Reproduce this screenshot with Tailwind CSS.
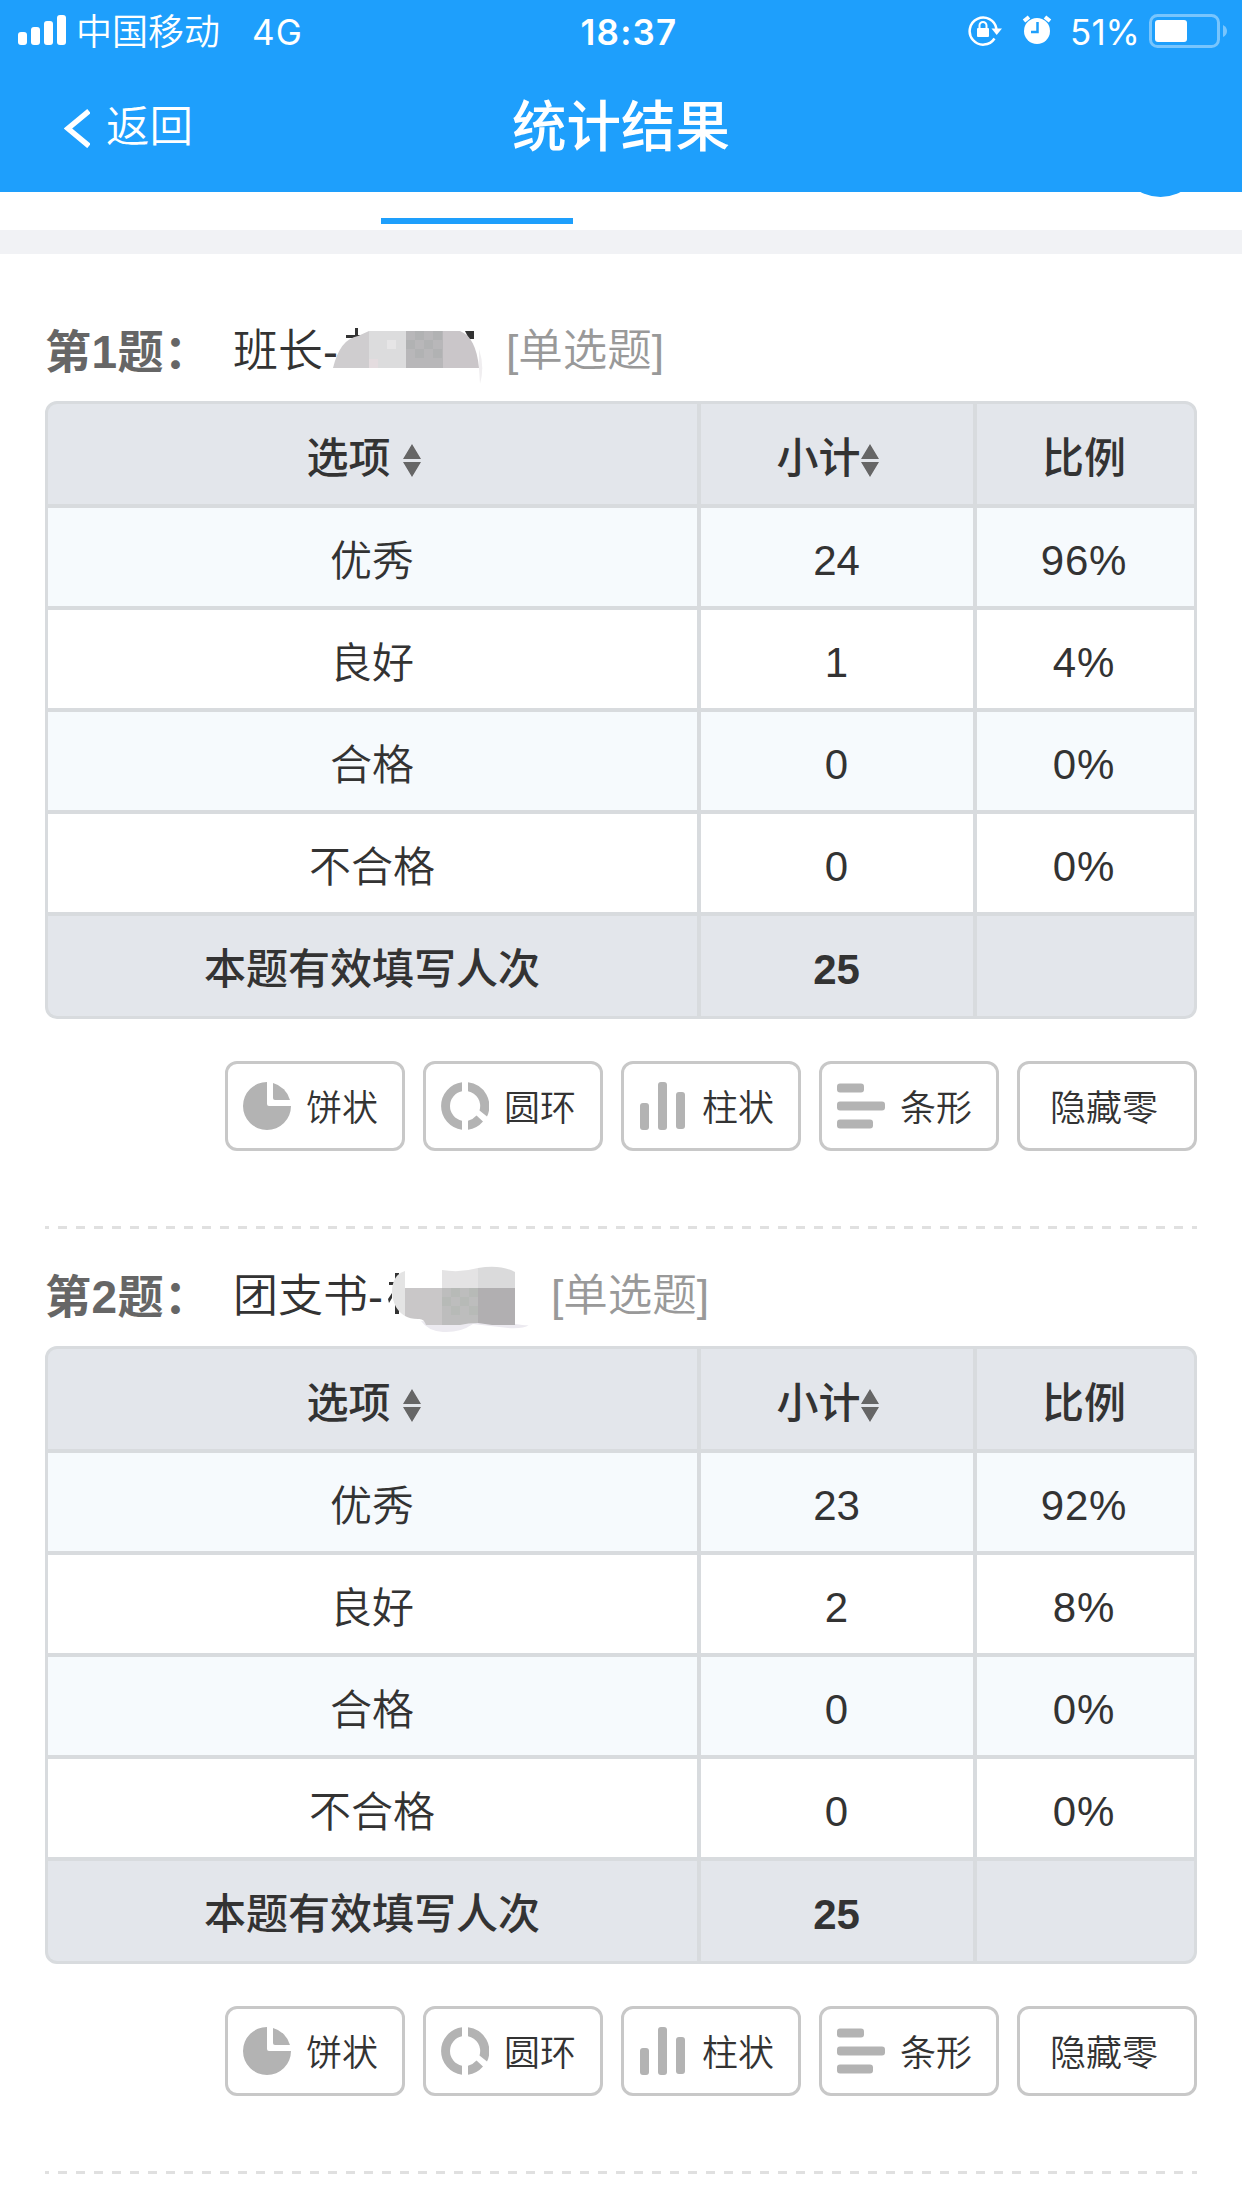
<!DOCTYPE html>
<html lang="zh-CN">
<head>
    <meta charset="UTF-8">
    <meta name="viewport" content="width=device-width, initial-scale=1.0">
    <title>统计结果</title>
    <script src="https://cdn.jsdelivr.net/npm/@tailwindcss/browser@4"></script>
</head>
<body class="bg-white text-[#333] h-[2208px] overflow-hidden font-['Liberation_Sans','Noto_Sans_CJK_SC',sans-serif]">
    <header class="bg-[#1e9ffc] text-white h-[192px]">
        <!-- Status bar -->
        <div class="h-[64px] grid grid-cols-3 items-center pl-[18px] pr-[14px] text-[36px] leading-none font-['Inter','Noto_Sans_CJK_SC',sans-serif]">
            <div class="flex items-center">
                <svg class="w-[48px] h-[30px] -mt-[4px]" viewBox="0 0 48 30" fill="#fff">
                    <rect x="0" y="17" width="9" height="13" rx="3"/>
                    <rect x="13" y="12" width="9" height="18" rx="3"/>
                    <rect x="26" y="6" width="9" height="24" rx="3"/>
                    <rect x="39" y="0" width="9" height="30" rx="3"/>
                </svg>
                <span class="ml-[10px] font-[350]">中国移动</span>
                <span class="ml-[32px] text-[35px] font-normal tracking-[1px]">4G</span>
            </div>
            <div class="text-center font-semibold text-[35px] tracking-[1.2px] pl-[12px]">18:37</div>
            <div class="flex items-center justify-end">
                <svg class="w-[34px] h-[32px] mr-[20px] -mt-[4px]" viewBox="0 0 34 32" fill="none">
                    <path d="M26.5 24.5A13.5 13.5 0 1 1 28.5 15" stroke="#fff" stroke-width="2.5"/>
                    <path d="M23.5 14.500H34L28.700 21z" fill="#fff"/>
                    <rect x="9" y="14" width="12" height="9" rx="1" fill="#fff"/>
                    <path d="M11.500 15v-3.500a3.500 3.500 0 0 1 7 0V15" stroke="#fff" stroke-width="2"/>
                </svg>
                <svg class="w-[30px] h-[30px] mr-[18px] -mt-[4px]" viewBox="0 0 30 30" fill="none">
                    <circle cx="15" cy="16" r="13" fill="#fff"/>
                    <path d="M2 6l5-4M28 6l-5-4" stroke="#fff" stroke-width="4"/>
                    <path d="M15.500 7v10H9" stroke="#1e9ffc" stroke-width="2.500"/>
                </svg>
                <span class="font-normal text-[35px]">51%</span>
                <svg class="w-[79px] h-[34px] ml-[9px] -mt-[3px]" viewBox="0 0 79 34" fill="none">
                    <rect x="1.500" y="1.500" width="68" height="31" rx="7" stroke="#fff" stroke-opacity=".4" stroke-width="3"/>
                    <rect x="6" y="6" width="32" height="22" rx="3" fill="#fff"/>
                    <path d="M74 11q4 2 4 6t-4 6z" fill="#fff" fill-opacity=".4"/>
                </svg>
            </div>
        </div>
        <!-- Title bar -->
        <div class="h-[128px] grid grid-cols-3 items-center px-[64px]">
            <div class="flex items-center">
                <svg class="w-[26px] h-[40px]" viewBox="0 0 26 40" fill="none">
                    <path d="M25 3L4 20.500L25 38" stroke="#fff" stroke-width="5.500"/>
                </svg>
                <span class="ml-[16px] text-[43.5px] leading-none font-[350]">返回</span>
            </div>
            <h1 class="text-center text-[54.5px] leading-none font-medium">统计结果</h1>
        </div>
    </header>

    <!-- Tab strip, scrolled under the header -->
    <div class="relative h-[38px] overflow-hidden flex items-end pb-[6px]">
        <div class="ml-[381px] w-[192px] h-[6px] bg-[#1e9ffc]"></div>
        <div class="absolute left-[1118px] -top-[80px] size-[85px] rounded-full bg-[#1e9ffc]"></div>
    </div>
    <div class="h-[24px] bg-[#f1f2f5]"></div>

    <main id="questions" class="px-[45px] pt-[30px]"></main>

    <template id="sortIcon">
        <svg class="w-[18px] h-[33px] shrink-0 mt-[3px]" viewBox="0 0 18 33" fill="#666">
            <path d="M9 0L18 15H0zM0 18H18L9 33z"/>
        </svg>
    </template>

    <template id="chartButtons">
        <div class="flex justify-end gap-[18px] mt-[42px] text-[36px] leading-none font-[350]">
            <button class="w-[180px] h-[90px] border-3 border-[#c8c8c8] rounded-[12px] flex items-center pl-[15px] gap-[15px]">
                <svg class="size-[48px] shrink-0" viewBox="0 0 48 48" fill="#b3b3b3">
                    <path d="M24 0A24 24 0 1 0 48 24H26a2 2 0 0 1-2-2z"/>
                    <path d="M30 1A24 24 0 0 1 47 18H32a2 2 0 0 1-2-2z"/>
                </svg>
                <span class="pt-[6px]">饼状</span>
            </button>
            <button class="w-[180px] h-[90px] border-3 border-[#c8c8c8] rounded-[12px] flex items-center pl-[15px] gap-[15px]">
                <svg class="size-[48px] shrink-0" viewBox="0 0 48 48" fill="#b3b3b3">
                    <path d="M21 .2V9.300A15 15 0 0 0 21 38.700V47.800A24 24 0 0 1 21 .2z"/>
                    <path d="M27 .2A24 24 0 0 1 46 34.500L38.500 28.500A15 15 0 0 0 27 9.300z"/>
                    <path d="M27 38.700Q32 37.500 35.500 33.500L42 39.500Q36 46.500 27 47.800z"/>
                </svg>
                <span class="pt-[6px]">圆环</span>
            </button>
            <button class="w-[180px] h-[90px] border-3 border-[#c8c8c8] rounded-[12px] flex items-center pl-[15px] gap-[15px]">
                <svg class="size-[48px] shrink-0" viewBox="0 0 48 48" fill="#b3b3b3">
                    <rect x="1" y="21" width="9" height="27" rx="3"/>
                    <rect x="19" y="0" width="9" height="48" rx="3"/>
                    <rect x="37" y="10" width="9" height="37" rx="3"/>
                </svg>
                <span class="pt-[6px]">柱状</span>
            </button>
            <button class="w-[180px] h-[90px] border-3 border-[#c8c8c8] rounded-[12px] flex items-center pl-[15px] gap-[15px]">
                <svg class="size-[48px] shrink-0" viewBox="0 0 48 48" fill="#b3b3b3">
                    <rect x="0" y="1.500" width="27" height="9" rx="3"/>
                    <rect x="0" y="19.500" width="48" height="9" rx="3"/>
                    <rect x="0" y="37.500" width="36" height="9" rx="3"/>
                </svg>
                <span class="pt-[6px]">条形</span>
            </button>
            <button class="w-[180px] h-[90px] border-3 border-[#c8c8c8] rounded-[12px] flex items-center justify-center pr-[6px]">
                <span class="pt-[6px]">隐藏零</span>
            </button>
        </div>
    </template>

    <!-- Pixelated patches that cover the names -->
    <template id="mask1">
        <svg class="w-[152px] h-[66px] -ml-[6px] -mr-[2px]" viewBox="0 0 152 66">
            <path d="M14 16H23V9H26V16H33V19H14zM133 12H142V20H137z" fill="#333"/>
            <path d="M1 49Q8 20 26 17L37 12H74V49z" fill="#cfcdcf"/>
            <path d="M37 12H74V49H37z" fill="#dcdcdd"/>
            <path d="M37 40h9v9h-9z" fill="#e4dcdf"/>
            <path d="M55 21h9v9h-9z" fill="#e6e5e6"/>
            <path d="M74 12H111V49H74z" fill="#b8b7b9"/>
            <path d="M83 12h9v9h-9zM101 12h9v9h-9zM74 21h9v9h-9zM92 21h9v9h-9zM83 30h9v9h-9zM101 30h9v9h-9z" fill="#b1b2b3"/>
            <path d="M111 12H128Q144 18 147 49H111z" fill="#cac6c9"/>
            <path d="M147 30Q153 48 148 65L147 49z" fill="#f0eef0"/>
        </svg>
    </template>
    <template id="mask2">
        <svg class="w-[144px] h-[76px] ml-[5px] -mr-[5px] mt-[4px]" viewBox="0 0 144 76">
            <path d="M7 12h4v10H7zM1 21h5v3H1zM0 38l4-6v5l-3 5zM7 42h4v11H7z" fill="#333"/>
            <path d="M17 10Q4 14 4 31Q5 48 17 55z" fill="#e4e4e4"/>
            <path d="M33 60L54 62L82 60L127 63Q140 65 141 64Q135 68 120 67L85 63Q72 72 55 71Q40 70 33 60z" fill="#eceaf0"/>
            <path d="M17 27H54V64H38Q36 57 30 58Q22 58 17 55z" fill="#c9c7c8"/>
            <path d="M54 9Q72 12 90 7V27H54z" fill="#e4e3e4"/>
            <path d="M90 7Q112 3 127 11V27H90z" fill="#dadadb"/>
            <path d="M54 27H90V62Q80 62 72 64H54z" fill="#bdbdbd"/>
            <path d="M63 27h9v9h-9zM81 27h9v9h-9zM54 36h9v9h-9zM72 36h9v9h-9zM63 45h9v9h-9zM81 45h9v9h-9z" fill="#b7bab7"/>
            <path d="M90 27H127V64H104L90 62z" fill="#b1afb1"/>
        </svg>
    </template>

    <script>
        const questions = [
            { no: 1, title: '班长-', mask: 'mask1', total: 25, rows: [['优秀', 24, '96%'], ['良好', 1, '4%'], ['合格', 0, '0%'], ['不合格', 0, '0%']] },
            { no: 2, title: '团支书-', mask: 'mask2', total: 25, rows: [['优秀', 23, '92%'], ['良好', 2, '8%'], ['合格', 0, '0%'], ['不合格', 0, '0%']] },
        ];
        const html = id => document.getElementById(id).innerHTML;

        document.getElementById('questions').innerHTML = questions.map(q => `
            <section class="h-[945px]">
                <div class="h-[117px] pt-[18px] flex items-center text-[45px] leading-none whitespace-nowrap">
                    <b class="w-[188px] text-[#666] text-[46px] tracking-[.5px]">第${q.no}题：</b>
                    <span class="font-[350]">${q.title}</span>${html(q.mask)}
                    <span class="ml-[24px] font-[350] text-[44.5px] text-[#999]">[单选题]</span>
                </div>
                <div class="h-[618px] border-3 border-[#d8dbde] rounded-[12px] overflow-hidden bg-[#d8dbde] grid grid-cols-[649px_272px_217px] grid-rows-[100px_98px_98px_98px_98px_100px] gap-[4px] text-[42px] leading-none text-center *:flex *:items-center *:justify-center">
                    <div class="bg-[#e3e6eb] font-medium gap-[12px] pt-[10px] pr-[18px]">选项${html('sortIcon')}</div>
                    <div class="bg-[#e3e6eb] font-medium pt-[10px] pr-[19px]">小计${html('sortIcon')}</div>
                    <div class="bg-[#e3e6eb] font-medium pt-[10px] pr-[3px]">比例</div>
                    ${q.rows.map((row, i) => `
                    <div class="${i % 2 ? 'bg-white' : 'bg-[#f6fafd]'} font-[350] pt-[9px] pr-[1px]">${row[0]}</div>
                    <div class="${i % 2 ? 'bg-white' : 'bg-[#f6fafd]'} pt-[8px] pr-[1px]">${row[1]}</div>
                    <div class="${i % 2 ? 'bg-white' : 'bg-[#f6fafd]'} tracking-[.8px] pt-[8px] pr-[3px]">${row[2]}</div>`).join('')}
                    <div class="bg-[#e3e6eb] font-medium pt-[8px] pr-[1px]">本题有效填写人次</div>
                    <div class="bg-[#e3e6eb] font-bold pt-[7px] pr-[1px]">${q.total}</div>
                    <div class="bg-[#e3e6eb]"></div>
                </div>
                ${html('chartButtons')}
                <div class="mt-[75px] h-[3px] bg-[repeating-linear-gradient(90deg,#e0e0e0_0_4.5px,transparent_4.5px_13.5px,#e0e0e0_13.5px_18px)]"></div>
            </section>`).join('');
    </script>
</body>
</html>
